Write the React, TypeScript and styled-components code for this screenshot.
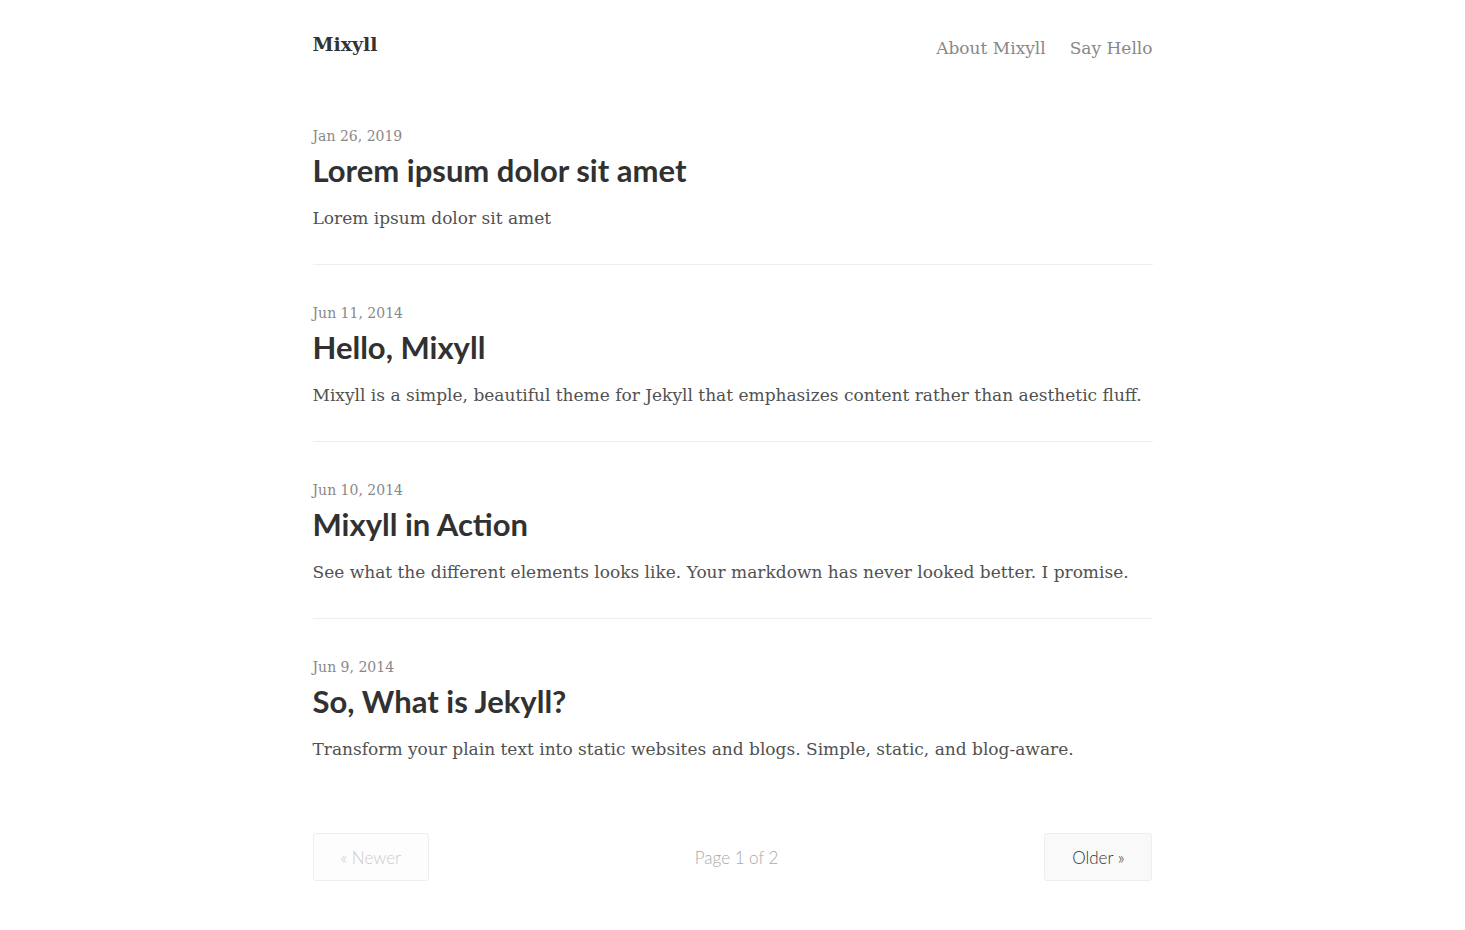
import styled, { createGlobalStyle } from 'styled-components';

const posts = [
  {
    date: 'Jan 26, 2019',
    title: 'Lorem ipsum dolor sit amet',
    excerpt: 'Lorem ipsum dolor sit amet',
  },
  {
    date: 'Jun 11, 2014',
    title: 'Hello, Mixyll',
    excerpt:
      'Mixyll is a simple, beautiful theme for Jekyll that emphasizes content rather than aesthetic fluff.',
  },
  {
    date: 'Jun 10, 2014',
    title: 'Mixyll in Action',
    excerpt:
      'See what the different elements looks like. Your markdown has never looked better. I promise.',
  },
  {
    date: 'Jun 9, 2014',
    title: 'So, What is Jekyll?',
    excerpt: 'Transform your plain text into static websites and blogs. Simple, static, and blog-aware.',
  },
];

const App = () => {
  return (
    <>
      <GlobalStyle />
      <Page>
        <Header>
          <SiteTitle href="#">Mixyll</SiteTitle>
          <Nav>
            <NavLink href="#">About Mixyll</NavLink>
            <NavLink href="#">Say Hello</NavLink>
          </Nav>
        </Header>
        <PostList>
          {posts.map((post, index) => (
            <PostItem key={`post-${index}`} $last={index === posts.length - 1}>
              <PostDate>{post.date}</PostDate>
              <PostTitle href="#">{post.title}</PostTitle>
              <Excerpt>{post.excerpt}</Excerpt>
            </PostItem>
          ))}
        </PostList>
        <Pagination>
          <PageButton $disabled>« Newer</PageButton>
          <PageInfo>Page 1 of 2</PageInfo>
          <PageButton href="#">Older »</PageButton>
        </Pagination>
      </Page>
    </>
  );
};

export default App;

const GlobalStyle = createGlobalStyle`
  html, body {
    margin: 0;
    padding: 0;
    background: #fff;
  }
  body {
    font-family: "DejaVu Serif", "Liberation Serif", serif;
    color: #515151;
  }
  a {
    text-decoration: none;
  }
`;

const Page = styled.div`
  width: 840px;
  margin: 0 auto;
  padding: 30px 0 48px;
`;

const Header = styled.header`
  display: flex;
  justify-content: space-between;
  align-items: flex-start;
  height: 84px;
`;

const SiteTitle = styled.a`
  font-weight: bold;
  font-size: 19px;
  color: #333;
  line-height: 28px;
`;

const Nav = styled.nav`
  display: flex;
  gap: 24px;
  padding-top: 4px;
`;

const NavLink = styled.a`
  font-size: 17px;
  line-height: 28px;
  color: #888;
`;

const PostList = styled.div`
  display: flex;
  flex-direction: column;
`;

const PostItem = styled.article<{ $last?: boolean }>`
  display: flex;
  flex-direction: column;
  padding: 12px 0 32px;
  margin-bottom: 26px;
  border-bottom: 1px solid ${(p) => (p.$last ? 'transparent' : '#eee')};
`;

const PostDate = styled.span`
  font-size: 14px;
  color: #888;
  line-height: 20px;
`;

const PostTitle = styled.a`
  font-family: Lato, "Liberation Sans", sans-serif;
  font-weight: 700;
  font-size: 31px;
  line-height: 40px;
  color: #313131;
  margin-top: 4px;
`;

const Excerpt = styled.p`
  font-size: 17px;
  line-height: 28px;
  margin: 14px 0 0;
  color: #515151;
`;

const Pagination = styled.nav`
  display: flex;
  justify-content: space-between;
  align-items: center;
  margin-top: 11px;
  font-family: Lato, sans-serif;
  font-weight: 300;
`;

const PageButton = styled.a<{ $disabled?: boolean }>`
  display: inline-block;
  padding: 0 27px;
  height: 48px;
  line-height: 48px;
  font-size: 17px;
  border: 1px solid #eee;
  border-radius: 3px;
  background: ${(p) => (p.$disabled ? '#fdfdfd' : '#f9f9f9')};
  color: ${(p) => (p.$disabled ? '#ccc' : '#333')};
  box-sizing: border-box;
`;

const PageInfo = styled.span`
  font-size: 17px;
  color: #aaa;
`;
